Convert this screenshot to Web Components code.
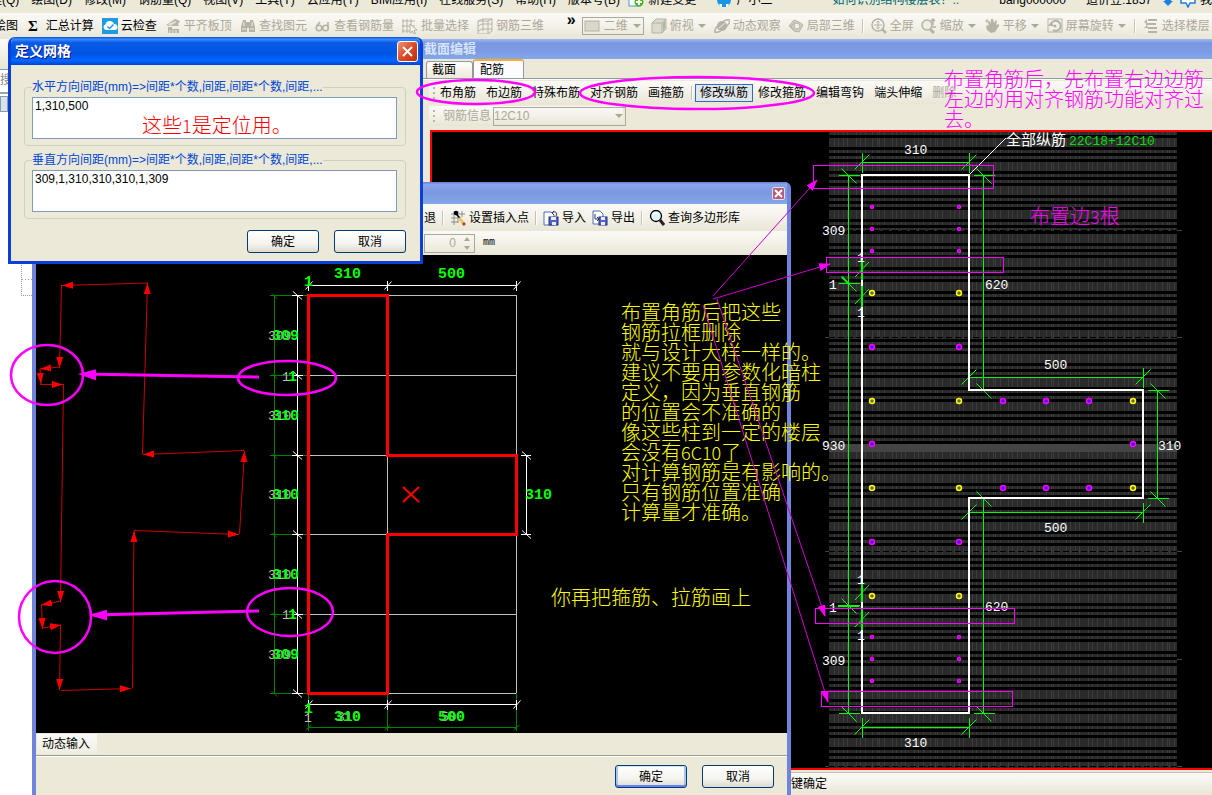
<!DOCTYPE html>
<html lang="zh-CN">
<head>
<meta charset="utf-8">
<title>定义网格</title>
<style>
  html, body { height: 100%; margin: 0; }
  body {
    font: 12px/16px "Liberation Sans", "Noto Sans CJK SC", sans-serif;
    color: #000;
    background: #ece9d8;
    overflow: hidden;
    --face: #ece9d8;
    --bar: linear-gradient(#fbfaf7, #f3f1e8 50%, #e9e6d6);
    --off: #aca899;
    --mark: #ff00ff;
  }
</style>
</head>
<body>
<cad-app></cad-app>

<script>
// small helper: every element here is a shadow root filled once
function define(name, html, setup) {
  const tpl = document.createElement("template");
  customElements.define(name, class extends HTMLElement {
    constructor() {
      super();
      this.attachShadow({ mode: "open" });
    }
    connectedCallback() {
      if (this.shadowRoot.childNodes.length) return;
      tpl.innerHTML = typeof html === "function" ? html(this) : html;
      this.shadowRoot.appendChild(tpl.content.cloneNode(true));
      if (setup) setup(this);
    }
  });
}

/* ---------- icons ---------- */
const G = "#b5b2a6";
const ICONS = {
  cloud: `<rect width="16" height="16" fill="#1f9be0"/><path d="M4 12a3 3 0 0 1-.5-5.800A4.500 4.500 0 0 1 12 6a3 3 0 0 1 1 6z" fill="#fff"/><path d="M5.500 8.500l2 2 4-4" fill="none" stroke="#1f9be0" stroke-width="1.500"/>`,
  slab: `<path d="M1 7l9-6 5 2-2 3 1 2H4z" fill="${G}"/><path d="M3 6l7-3 2 1-7 4z" fill="#e4e1d6"/><path d="M3 9h4v2h7v4H3z" fill="${G}"/><path d="M5 12v3M8 12v3M11 12v3" stroke="#efede4"/>`,
  binoculars: `<path d="M3 2h3v2h4V2h3l2 7v5H9v-4H7v4H1V9z" fill="${G}"/><path d="M2 11h4M10 11h4M4 4v4M12 4v4" stroke="#f0eee6"/>`,
  glasses: `<g fill="none" stroke="${G}" stroke-width="1.600"><circle cx="4" cy="10" r="2.800"/><circle cx="10.500" cy="10" r="2.800"/><path d="M1.500 8L5 4M13 9V4"/></g>`,
  batch: `<path d="M1 1v14M5 1v14M9 1v14M0 3h13M0 8h13M0 13h8" stroke="${G}" fill="none"/><path d="M8 6l7 6-3 .500 1.500 3-1.500.500-1.500-3L8 15z" fill="#f6f4ee" stroke="${G}"/>`,
  rebar: `<path d="M1 3l5-2h9v12l-4 3H1zM6 1v12M11 3v13M1 8l4-2h10M1 13l4-2h10M1 3h10l4-2" stroke="${G}" fill="none"/>`,
  view2d: `<rect x="1" y="3" width="14" height="10" fill="#dad7ca" stroke="${G}"/>`,
  cube: `<path d="M1 5l4-4h10v10l-4 4H1z" fill="#dcd9cd" stroke="${G}"/><path d="M1 5h10v10M11 5l4-4" fill="none" stroke="${G}"/><path d="M12 5l2-2v7l-2 3z" fill="${G}"/>`,
  orbit: `<circle cx="8" cy="8" r="5" fill="${G}"/><path d="M1 14C-1 11 11 0 15 2s-9 14-14 12z" fill="none" stroke="${G}" stroke-width="1.500"/><path d="M5 10l6-5" stroke="#eceae0"/>`,
  part3d: `<path d="M1 8l5-6 5 2 4 3-4 7-5-1z" fill="#d2cfc3" stroke="${G}"/><circle cx="9" cy="8" r="3" fill="#efede5" stroke="${G}"/><path d="M3 8l4-4M5 12l-2-4" stroke="${G}"/>`,
  full: `<circle cx="7" cy="7" r="6" fill="none" stroke="${G}" stroke-width="1.500"/><path d="M7 3v8M3 7h8M5.500 4.500L7 3l1.500 1.500M5.500 9.500L7 11l1.500-1.500" fill="none" stroke="${G}"/><path d="M11 11l4 4" stroke="${G}" stroke-width="2.500"/>`,
  zoom: `<circle cx="6" cy="7" r="5" fill="#eeece3" stroke="${G}" stroke-width="1.500"/><path d="M9 11l4 4" stroke="${G}" stroke-width="3"/><path d="M12 1v6M10 3l2-2 2 2M10 9h5" fill="none" stroke="${G}" stroke-width="1.500"/>`,
  pan: `<path d="M2 8l2-1 1 2-1-5 2-1 1 3V1h2l1 4 2-3 1 1-1 4 3-1v2l-4 6-4 1-4-3z" fill="${G}"/><path d="M1 3h4M3 1v4" stroke="${G}"/>`,
  rotate: `<rect x="1" y="1" width="14" height="13" fill="none" stroke="${G}"/><path d="M4 6a5 5 0 1 1 2 6" fill="none" stroke="${G}" stroke-width="2"/><path d="M1 8l3-4 3 4z" fill="${G}"/><circle cx="8" cy="8" r="1.500" fill="${G}"/>`,
  floor: `<path d="M5 1h9v2H5zM3 5h10v2H3zM5 9h9v2H5zM5 13h9v2H5z" fill="${G}"/><path d="M1 4l3-3v5zM4 7L1 10h4" fill="${G}"/>`,
  note: `<rect x="1" y="1" width="11" height="13" fill="#fff" stroke="#3aa0c8"/><circle cx="11" cy="10" r="4.500" fill="#49b81e"/><path d="M11 7v6M8 10h6" stroke="#fff" stroke-width="2"/>`,
  person: `<circle cx="8" cy="8" r="7" fill="#1a98e8"/><path d="M3 12h10l-2 3H5z" fill="#fff"/><path d="M6 12h4v3H6z" fill="#1a98e8"/>`,
  arrow: `<path d="M3 9h10l-5 5z" fill="#1a7fe0"/><path d="M5 2h6v7H5z" fill="#1a7fe0"/>`,
  bubble: `<path d="M1 2h14v9h-5l-2 4-2-4H1z" fill="#fff" stroke="#1a7fe0" stroke-width="1.500"/>`,
  insert: `<path d="M1 4h14M1 8h10M1 12h7M4 1v14M8 1v12M12 1v6" stroke="#8c8c8c" fill="none"/><circle cx="6" cy="3" r="2.200" fill="#000"/><path d="M6 4l4 4" stroke="#000" stroke-width="1.500"/><path d="M9 8l5 6" stroke="#e8c860" stroke-width="3"/><path d="M13 13l2 2" stroke="#c04030" stroke-width="3"/>`,
  import: `<path d="M1 2h7l3 3v10H1z" fill="#fff" stroke="#4a6fb0"/><rect x="6" y="7" width="9" height="8" fill="#5560c8" stroke="#23307c"/><path d="M8 7h5v3H8zM9 12h4v3H9z" fill="#e8ecff"/><path d="M9 3c3-3 6 0 4 3M11 1L9 3l2 2" fill="none" stroke="#335"/>`,
  export: `<path d="M1 1h7l3 3v10H1z" fill="#fff" stroke="#4a6fb0"/><path d="M3 4v5h4M5 7l2 2-2 2" fill="none" stroke="#335"/><rect x="7" y="7" width="8" height="8" fill="#5560c8" stroke="#23307c"/><path d="M9 7h4v3H9zM9 12h4v3H9z" fill="#e8ecff"/>`,
  search: `<circle cx="7" cy="6" r="5.500" fill="#dff3fb" stroke="#000" stroke-width="1.300"/><path d="M11 10l4 5" stroke="#222" stroke-width="3"/><path d="M4 5c1-2 3-2 4-2" stroke="#fff" fill="none" stroke-width="1.500"/>`,
  down: `<path d="M4 6h8l-4 4z" fill="currentColor"/>`
};

define("ui-icon", el => `
  <style>
    :host { display: block; flex: none; width: 16px; height: 16px; }
    svg { display: block; width: 100%; height: 100%; }
  </style>
  <svg viewBox="${el.getAttribute("name") === "down" ? "3 0 10 16" : "0 0 16 16"}" aria-hidden="true">${ICONS[el.getAttribute("name")]}</svg>`);

/* ---------- tool buttons ---------- */
define("tool-button", el => `
  <style>
    :host { display: block; flex: none; }
    button {
      display: flex; align-items: center; gap: 3px;
      height: 18px; margin: 0; padding: 0; border: 0;
      font: inherit; line-height: 16px; color: inherit; background: none; white-space: nowrap;
    }
    .drop { width: 10px; }
    :host([off]) button { color: var(--off); }
    :host([text]) button { padding: 0 4px; border: 1px solid transparent; }
    :host([on]) button { border-color: #316ac5; background: #e1e6e8; }
  </style>
  <button ${el.hasAttribute("off") ? "disabled" : ""}>
    ${el.hasAttribute("icon") ? `<ui-icon name="${el.getAttribute("icon")}"></ui-icon>` : ""}
    <slot></slot>
    ${el.hasAttribute("menu") ? `<ui-icon class="drop" name="down"></ui-icon>` : ""}
  </button>`);

define("tool-sep", `
  <style>:host { display: block; flex: none; width: 1px; height: 14px; background: #c5c2b2; border-right: 1px solid #fff; }</style>`);

define("tool-grip", `
  <style>:host { display: block; flex: none; width: 2px; height: 12px; background: repeating-linear-gradient(#b8b5a6 0 2px, transparent 2px 5px); }</style>`);

define("drop-down", el => `
  <style>
    :host { display: flex; align-items: center; flex: none; box-sizing: border-box; height: 18px; border: 1px solid #aca899; color: var(--off); }
    select { flex: 1; min-width: 0; appearance: none; border: 0; padding: 0; margin: 0; font: inherit; color: inherit; background: none; opacity: 1; }
    .drop { width: 10px; margin-right: 1px; }
  </style>
  <slot></slot>
  <select disabled aria-label="${el.getAttribute("label")}"><option>${el.getAttribute("value")}</option></select>
  <ui-icon class="drop" name="down"></ui-icon>`);

define("xp-button", `
  <style>
    :host { display: block; }
    button {
      display: block; width: 72px; height: 23px; padding: 0; margin: 0;
      border: 1px solid #003c74; border-radius: 3px;
      font: inherit; color: #000; background: linear-gradient(#fff, #f5f4ef 60%, #dedad0);
    }
    :host([default]) button { box-shadow: inset 0 1px #cee7ff, inset 0 -2px #6982ee, inset 2px 0 #a6c4f5, inset -2px 0 #a6c4f5; }
  </style>
  <button><slot></slot></button>`);

/* ---------- top bars ---------- */
define("menu-bar", `
  <style>
    :host { display: flex; height: 13px; overflow: hidden; background: var(--face); }
    nav, div { display: flex; align-items: center; gap: 12px; height: 16px; margin-top: -8px; white-space: nowrap; }
    nav { flex: 0 0 53%; margin-left: -22px; }
    div { flex: 1; gap: 4px; margin-left: 8px; }
    a { color: inherit; text-decoration: none; }
    .tip { margin-left: auto; color: #00666e; }
    .user { margin-left: 36px; }
    .bean { margin: 0 4px 0 16px; }
    .who { margin-left: 16px; }
  </style>
  <nav>
    <a href="#">工程(Q)</a><a href="#">绘图(D)</a><a href="#">修改(M)</a><a href="#">钢筋量(Q)</a>
    <a href="#">视图(V)</a><a href="#">工具(T)</a><a href="#">云应用(Y)</a><a href="#">BIM应用(I)</a>
    <a href="#">在线服务(S)</a><a href="#">帮助(H)</a><a href="#">版本号(B)</a>
  </nav>
  <div>
    <ui-icon name="note"></ui-icon><a href="#">新建变更</a>
    <ui-icon class="who" name="person"></ui-icon><a href="#">广小二</a>
    <a class="tip" href="#">如何识别结构楼层表？..</a>
    <span class="user">bang000000</span><span class="bean">造价豆:1857</span>
    <ui-icon name="arrow"></ui-icon><ui-icon name="bubble"></ui-icon><span>我</span>
  </div>`);

define("main-tools", `
  <style>
    :host { display: flex; height: 26px; background: var(--bar); overflow: hidden; }
    div { display: flex; align-items: center; gap: 8px; }
    .left { flex: 0 0 48%; margin-left: -6px; }
    .sum { font: bold 15px/16px "Liberation Serif", serif; margin-left: 2px; }
    .more { margin-left: auto; font-weight: bold; font-size: 16px; line-height: 10px; align-self: flex-start; padding-top: 2px; }
    .right { flex: 1; gap: 7px; padding-left: 6px; }
    drop-down { width: 62px; }
    drop-down ui-icon { margin: 0 4px 0 1px; }
  </style>
  <div class="left">
    <tool-button>绘图</tool-button>
    <span class="sum">Σ</span><tool-button>汇总计算</tool-button>
    <tool-button icon="cloud">云检查</tool-button>
    <tool-button off icon="slab">平齐板顶</tool-button>
    <tool-button off icon="binoculars">查找图元</tool-button>
    <tool-button off icon="glasses">查看钢筋量</tool-button>
    <tool-button off icon="batch">批量选择</tool-button>
    <tool-button off icon="rebar">钢筋三维</tool-button>
    <span class="more">»</span>
  </div>
  <div class="right">
    <drop-down label="视图" value="二维"><ui-icon name="view2d"></ui-icon></drop-down>
    <tool-button off icon="cube" menu>俯视</tool-button>
    <tool-button off icon="orbit">动态观察</tool-button>
    <tool-button off icon="part3d">局部三维</tool-button>
    <tool-sep></tool-sep>
    <tool-button off icon="full">全屏</tool-button>
    <tool-button off icon="zoom" menu>缩放</tool-button>
    <tool-button off icon="pan" menu>平移</tool-button>
    <tool-button off icon="rotate" menu>屏幕旋转</tool-button>
    <tool-sep></tool-sep>
    <tool-button off icon="floor">选择楼层</tool-button>
    <tool-button off icon="cube"></tool-button>
  </div>`);

define("side-panel", `
  <style>
    :host { display: flex; flex-direction: column; background: #fff; }
    .head { height: 30px; background: var(--bar); }
    .find { height: 22px; border-top: 1px solid #7f9db9; border-bottom: 2px solid #9aa4ac; color: #888; line-height: 20px; overflow: hidden; }
    .row { height: 14px; background: #d8e2ec; border: 1px solid #8a9bab; margin-top: 2px; width: 6px; }
    .tree { margin: 150px 0 0 21px; height: 32px; border: 1px dotted #999; border-right: 0;
      background: repeating-linear-gradient(90deg, #999 0 1px, transparent 1px 3px) 0 16px / 100% 1px no-repeat; }
  </style>
  <div class="head"></div><div class="find">搜</div><div class="row"></div><div class="tree"></div>`);

/* ---------- drawing helpers ---------- */
const line = (x1, y1, x2, y2, cls = "") => `<line class="${cls}" x1="${x1}" y1="${y1}" x2="${x2}" y2="${y2}"/>`;
const text = (x, y, s, cls = "") => `<text class="${cls}" x="${x}" y="${y}">${s}</text>`;

const SVG_BASE = `
  :host { display: block; flex: 1; min-height: 0; background: #000; overflow: hidden; }
  svg { display: block; width: 100%; height: 100%; }
  line, polyline, polygon, rect { shape-rendering: crispEdges; }
  .smooth { shape-rendering: auto; }
  text { font-family: "Liberation Mono", "Noto Sans CJK SC", monospace; }`;

// grid of the polygon editor, with its dimension chains
function polygonDrawing() {
  const ys = [295.5, 375.5, 455.5, 534.5, 614.5, 693.5];
  const xs = [308.5, 387.5, 516.5];
  let s = "";
  ys.forEach(y => {
    s += line(308, y, 516, y, "grid") + line(270, y, 308, y, "dk") + line(292, y, 303, y, "w");
    s += line(272, y - 2, 277, y + 3, "dk smooth") + line(293, y - 4, 302, y + 4, "w smooth");
  });
  xs.forEach(x => {
    s += line(x, 295, x, 693, "grid") + line(x, 693, x, 731, "dk");
    [285.5, 704.5].forEach(y => s += line(x, y - 5, x, y + 5, "w") + line(x - 3, y + 4, x + 4, y - 4, "w smooth"));
    s += line(x - 3, 730, x + 3, 725, "dk smooth");
  });
  s += line(308, 285.5, 516, 285.5, "w") + line(308, 704.5, 516, 704.5, "w") + line(308, 727.5, 516, 727.5, "dk");
  s += line(274.5, 295, 274.5, 693, "dk") + line(297.5, 295, 297.5, 693, "w") + line(526.5, 455, 526.5, 534, "w");
  [455.5, 534.5].forEach(y => s += line(521, y, 531, y, "w") + line(522, y - 4, 531, y + 4, "w smooth"));
  s += `<polygon class="shape" points="308.5,295.500 387.5,295.500 387.5,455.500 516.5,455.500 516.5,534.500 387.5,534.500 387.5,693.500 308.5,693.500"/>`;
  s += line(403, 487, 419, 502, "cross smooth") + line(419, 487, 403, 502, "cross smooth");

  [[335, "309"], [415, "310"], [494, "310"], [574, "310"], [654, "309"]].forEach(([y, t]) =>
    s += text(268, y + 5, t, "dim2") + text(272, y + 5, t, "dim"));
  [376, 614].forEach(y => s += text(282, y + 5, "1", "dim2") + text(288, y + 5, "1", "dim"));
  s += text(334, 278, "310", "dim") + text(438, 278, "500", "dim") + text(304, 286, "1", "dim");
  s += text(337, 721, "310", "dim2") + text(334, 721, "310", "dim") + text(441, 721, "500", "dim2") + text(438, 721, "500", "dim");
  s += text(304, 722, "1", "dim2") + text(304, 713, "1", "dim") + text(525, 499, "310", "dim");

  // hand sketched outline, one arrow for each side
  [[148, 283, 62, 285.5], [61.5, 285, 59.5, 368], [60, 367, 40, 369], [40, 369, 41, 384], [40, 384.5, 63, 384.5],
   [63.5, 384, 60.5, 602], [61, 601, 41, 605], [41.5, 605, 42.5, 629], [42, 628, 61, 625], [60.5, 625, 59.5, 690],
   [61, 690.5, 131, 688.5], [132.5, 688, 134, 531], [134, 530.5, 239, 534.5], [239.5, 534, 244.5, 451],
   [244, 450.5, 143, 454.5], [142.5, 454, 147.5, 283]
  ].forEach(p => s += line(...p, "path smooth"));
  return s;
}

define("polygon-canvas", () => `
  <style>${SVG_BASE}
    .grid { stroke: #c0c0c0; } .w { stroke: #fff; } .dk { stroke: #008000; }
    .shape { fill: none; stroke: #f00; stroke-width: 3; }
    .cross { stroke: #f00; stroke-width: 2; }
    .path { stroke: #d00000; marker-end: url(#tip); }
    .dim { font-size: 15px; font-weight: bold; fill: #0f0; }
    .dim2 { font-size: 13px; fill: #c0c0c0; }
  </style>
  <svg role="img" aria-label="网格">
    <defs><marker id="tip" markerUnits="userSpaceOnUse" markerWidth="12" markerHeight="8" refX="11" refY="4" orient="auto"><path d="M0 0.500L11 4L0 7.500z" fill="#f00"/></marker></defs>
    <g transform="translate(-36 -255)">${polygonDrawing()}</g>
  </svg>`);

// horizontal dimension: line with a crossed tick on both ends
function hDim(x1, x2, y) {
  return line(x1, y, x2, y, "g") + [x1, x2].map(x =>
    line(x, y - 10, x, y + 10, "g") + line(x - 8, y + 7, x + 7, y - 8, "g smooth")).join("");
}
function vDim(x, y1, y2, extra = []) {
  return line(x, y1, x, y2, "g") + [y1, y2, ...extra].map(y =>
    line(x - 10, y, x + 11, y, "g") + line(x - 7, y - 7, x + 8, y + 8, "g smooth")).join("");
}

function sectionDrawing() {
  let s = `<rect x="829" y="132" width="348" height="636" fill="url(#bars)"/><rect x="829" y="132" width="348" height="636" fill="url(#rows)"/>`;
  s += `<rect x="829" y="444" width="348" height="8" fill="#444"/>`;
  [230.5, 337.5, 551.5, 659.5, 766.5].forEach(y => s += line(825, y, 829, y, "end") + line(829, y, 1177, y, "axis") + line(1177, y, 1182, y, "end"));
  s += hDim(862.5, 969.5, 162.5) + hDim(969.5, 1143.5, 377.5) + hDim(969.5, 1143.5, 512.5) + hDim(862.5, 969.5, 727.5);
  s += vDim(848.5, 175.5, 713.5, [283.5, 605.5]) + vDim(983.5, 175.5, 390.5) + vDim(983.5, 498.5, 713.5) + vDim(1157.5, 390.5, 498.5);
  s += `<polygon class="outline" points="862,175 969,175 969,390 1143,390 1143,498 969,498 969,713 862,713"/>`;
  s += line(862, 260, 862, 280, "g2") + line(862, 286, 862, 307, "g2") + line(862, 583, 862, 602, "g2") + line(862, 609, 862, 630, "g2");
  [269, 296, 592, 619].forEach(y => s += line(855, y + 8, 869, y - 7, "g smooth"));
  s += line(970, 174, 1006, 138, "w smooth");
  s += line(842, 277, 849, 284, "g2 smooth") + line(838, 605.5, 859, 605.5, "g2");

  const dot = (x, y, c, r = 2.5) => `<circle cx="${x}" cy="${y}" r="${r}" fill="${c === "y" ? "#665" : "#40f"}" stroke="${c === "y" ? "#ff0" : "#f0f"}" stroke-width="1.500"/>`;
  [207, 229, 251, 637, 659, 681].forEach(y => s += dot(872, y, "m", 1.5) + dot(959, y, "m", 1.5));
  [[293, "y"], [347, "m"], [542, "m"], [596, "y"]].forEach(([y, c]) => s += dot(872, y, c) + dot(959, y, c));
  [401, 488].forEach(y => [[872, "y"], [959, "y"], [1003, "m"], [1046, "m"], [1089, "m"], [1133, "y"]].forEach(([x, c]) => s += dot(x, y, c)));
  s += dot(872, 444, "m") + dot(1133, 444, "m");

  [[904, 149, "310"], [822, 230, "309"], [829, 284, "1"], [985, 284, "620"], [1044, 364, "500"], [822, 445, "930"], [1158, 445, "310"],
   [1044, 527, "500"], [985, 606, "620"], [829, 607, "1"], [822, 660, "309"], [904, 742, "310"],
   [857, 257, "1"], [857, 312, "1"], [857, 579, "1"], [857, 635, "1"]
  ].forEach(([x, y, t]) => s += text(x, y + 5, t));
  s += text(1006, 145, "全部纵筋", "cn") + text(1069, 145, "22C18+12C10", "green");
  return s;
}

define("section-canvas", () => `
  <style>${SVG_BASE}
    :host { border: 2px solid #f00; border-right: 0; }
    text { font-size: 13px; fill: #fff; } .green { fill: #00e000; } .cn { font-size: 15px; }
    .g { stroke: #0f0; } .g2 { stroke: #0f0; stroke-width: 2; } .w { stroke: #fff; }
    .axis { stroke: #000; stroke-dasharray: 6 3; } .end { stroke: #444; }
    .outline { fill: none; stroke: #fff; stroke-width: 2; }
  </style>
  <svg role="img" aria-label="截面配筋">
    <defs>
      <pattern id="bars" width="58" height="24" patternUnits="userSpaceOnUse" x="829" y="138">
        <rect width="58" height="24" fill="#2a2a2a"/>
        <path d="M5.500 0v24M9.500 0v24M14.500 0v24M18.500 0v24M27.500 0v24M31.500 0v24M36.500 0v24M43.500 0v24M48.500 0v24M50.500 0v24M55.500 0v24" stroke="#3c3c3c"/>
      </pattern>
      <pattern id="rows" width="58" height="24" patternUnits="userSpaceOnUse" x="829" y="138">
        <path d="M0 9h58v3H0zM0 15h58v3H0zM0 21h58v3H0z" fill="#000"/>
      </pattern>
    </defs>
    <g transform="translate(-432 -132)">${sectionDrawing()}</g>
  </svg>`);

/* ---------- windows ---------- */
define("section-editor", `
  <style>
    :host { display: flex; flex-direction: column; background: var(--face); }
    h2 { margin: 0; height: 20px; padding-left: 4px; font-size: 13px; line-height: 20px; color: #d8e4f8; background: linear-gradient(#9db9f0, #7b97e0 20%, #7d9ae4 60%, #82a9e9); }
    .tabs { display: flex; align-items: flex-end; height: 19px; padding-left: 6px; border-bottom: 1px solid #919b9c; box-shadow: 0 1px #fff; }
    .tabs button { height: 17px; margin: 0; padding: 0 16px 0 5px; border: 1px solid #919b9c; border-bottom: 0; border-radius: 3px 3px 0 0; font: inherit; background: linear-gradient(#fff, #ece9d8); }
    .tabs .on { height: 19px; padding: 0 19px 0 6px; border-top: 2px solid #ffab2e; background: #fcfcfe; }
    .bar { display: flex; align-items: center; height: 23px; margin: 2px 0 0 9px; padding-left: 4px; background: var(--bar); white-space: nowrap; }
    .info { align-self: flex-start; gap: 8px; width: 190px; height: 20px; margin-bottom: 4px; color: var(--off); }
    .info drop-down { width: 133px; margin-left: -6px; height: 19px; }
    .wide { margin-left: 2px; }
    section-canvas { margin-left: 10px; }
    footer { display: flex; align-items: center; height: 22px; margin-top: 2px; padding-left: 371px; border-top: 1px solid #c5c2b2; background: var(--bar); }
  </style>
  <h2>截面编辑</h2>
  <div class="tabs"><button>截面</button><button class="on">配筋</button></div>
  <div class="bar">
    <tool-grip></tool-grip>
    <tool-button text>布角筋</tool-button><tool-button text>布边筋</tool-button><tool-button text>特殊布筋</tool-button>
    <tool-button text>对齐钢筋</tool-button><tool-button text>画箍筋</tool-button>
    <tool-sep class="wide"></tool-sep><tool-button class="wide" text on>修改纵筋</tool-button>
    <tool-button text>修改箍筋</tool-button><tool-button text>编辑弯钩</tool-button><tool-button text>端头伸缩</tool-button>
    <tool-button text off>删除</tool-button>
  </div>
  <div class="bar info"><tool-grip></tool-grip>钢筋信息<drop-down label="钢筋信息" value="12C10"></drop-down></div>
  <section-canvas></section-canvas>
  <footer>键确定</footer>`);

define("polygon-editor", `
  <style>
    :host { display: flex; flex-direction: column; box-sizing: border-box; border: solid #6f85dc; border-width: 0 4px; border-radius: 6px 6px 0 0; background: var(--face); overflow: hidden; }
    header { display: flex; align-items: center; justify-content: flex-end; height: 22px; margin: 0 -4px; padding-right: 6px; background: linear-gradient(#5f78cc, #8aa5ea 10%, #7b97e0 50%, #82a9e9); }
    .x { width: 13px; height: 13px; padding: 0; border: 1px solid #e8d8e8; border-radius: 2px; background: #b0607c; }
    .x svg { display: block; width: 11px; height: 11px; }
    .bar { display: flex; align-items: center; gap: 6px; height: 27px; padding-left: 388px; background: var(--bar); }
    .size { height: 24px; gap: 0; }
    .spin { display: flex; align-items: center; box-sizing: border-box; width: 51px; height: 19px; border: 1px solid #aca899; margin-right: 8px; }
    .spin input { flex: 1; min-width: 0; border: 0; padding: 0 4px 0 0; text-align: right; font: inherit; color: #aca899; background: none; }
    .spin svg { width: 14px; height: 17px; }
    .unit { font-family: "Liberation Mono", monospace; font-size: 10px; }
    .tab { height: 22px; border-bottom: 1px solid #9d9a8c; box-shadow: 0 1px #fff; }
    .tab button { height: 20px; margin: 1px; padding: 0 7px 0 5px; border: 0; font: inherit; background: linear-gradient(#fbfaf7, #efede2); }
    .actions { display: flex; justify-content: flex-end; gap: 15px; height: 30px; padding: 9px 13px 0 0; }
  </style>
  <header><button class="x" aria-label="关闭"><svg viewBox="0 0 11 11"><path d="M2 2l7 7M9 2l-7 7" stroke="#fff" stroke-width="2"/></svg></button></header>
  <div class="bar">
    <tool-button>退</tool-button><tool-sep></tool-sep>
    <tool-button icon="insert">设置插入点</tool-button><tool-sep></tool-sep>
    <tool-button icon="import">导入</tool-button><tool-button icon="export">导出</tool-button><tool-sep></tool-sep>
    <tool-button icon="search">查询多边形库</tool-button>
  </div>
  <div class="bar size">
    <div class="spin"><input value="0" disabled aria-label="偏移"><svg viewBox="0 0 14 17"><path d="M4 6h6L7 2zM4 11h6l-3 4z" fill="#aca899"/></svg></div>
    <span class="unit">mm</span>
  </div>
  <polygon-canvas></polygon-canvas>
  <div class="tab"><button>动态输入</button></div>
  <div class="actions"><xp-button default>确定</xp-button><xp-button>取消</xp-button></div>`);

define("spacing-field", el => `
  <style>
    :host { display: block; }
    fieldset { margin: 0; padding: 3px 8px 6px 7px; border: 1px solid #d0d0bf; border-radius: 4px; }
    legend { padding: 0; color: #0046d5; line-height: 14px; white-space: nowrap; }
    textarea { display: block; box-sizing: border-box; width: 100%; height: 42px; margin: 0; padding: 0 2px; border: 1px solid #7f9db9; border-radius: 0; font: inherit; resize: none; background: #fff; color: #000; }
  </style>
  <fieldset>
    <legend><label for="v">${el.getAttribute("label")}</label></legend>
    <textarea id="v">${el.getAttribute("value")}</textarea>
  </fieldset>`);

define("grid-dialog", `
  <style>
    :host { display: block; box-sizing: border-box; border: 3px solid #0a3fd8; border-top: 0; border-radius: 7px 7px 0 0; background: var(--face); overflow: hidden; }
    header { display: flex; align-items: center; justify-content: space-between; height: 28px; margin: 0 -3px; padding: 0 5px 0 7px; background: linear-gradient(#0a50d8, #3b8cff 8%, #0a5ce6 20%, #0054e3 60%, #0066ff 85%, #0043cc); }
    h1 { margin: 0; font-size: 14px; line-height: 20px; color: #fff; text-shadow: 1px 1px #0f1089; }
    header button { width: 21px; height: 21px; padding: 0; border: 1px solid #fff; border-radius: 3px; background: linear-gradient(135deg, #f0937a, #dc4a26 50%, #b83010); }
    header svg { display: block; width: 19px; height: 19px; }
    form { display: flex; flex-direction: column; gap: 7px; padding: 15px 14px 8px 13px; }
    .actions { display: flex; justify-content: flex-end; gap: 15px; padding-top: 4px; }
  </style>
  <header>
    <h1>定义网格</h1>
    <button aria-label="关闭"><svg viewBox="0 0 19 19"><path d="M5 5l9 9M14 5l-9 9" stroke="#fff" stroke-width="2"/></svg></button>
  </header>
  <form onsubmit="return false">
    <spacing-field label="水平方向间距(mm)=&gt;间距*个数,间距,间距*个数,间距,..." value="1,310,500"></spacing-field>
    <spacing-field label="垂直方向间距(mm)=&gt;间距*个数,间距,间距*个数,间距,..." value="309,1,310,310,310,1,309"></spacing-field>
    <div class="actions"><xp-button>确定</xp-button><xp-button>取消</xp-button></div>
  </form>`);

/* ---------- annotations over all windows ---------- */
const NOTES = ["布置角筋后把这些", "钢筋拉框删除", "就与设计大样一样的。", "建议不要用参数化暗柱", "定义，因为垂直钢筋", "的位置会不准确的",
  "像这些柱到一定的楼层", '会没有<tspan class="half">6C10</tspan>了', "对计算钢筋是有影响的。", "只有钢筋位置准确", "计算量才准确。"];

define("mark-layer", () => `
  <style>
    :host { display: block; pointer-events: none; }
    svg { display: block; width: 100%; height: 100%; }
    text { font: 20px "Noto Sans CJK SC", sans-serif; font-weight: 300; }
    .half { font-size: 18px; }
    ellipse, rect { fill: none; stroke: var(--mark); }
    ellipse { stroke-width: 2.5; } rect { shape-rendering: crispEdges; }
    .thin { stroke: #d000d0; marker-end: url(#small); }
    .thick { stroke: var(--mark); stroke-width: 3; marker-end: url(#big); }
    .yellow { fill: #ff0; } .red { fill: #f00; } .pink { fill: var(--mark); }
  </style>
  <svg>
    <defs>
      <marker id="small" markerUnits="userSpaceOnUse" markerWidth="13" markerHeight="8" refX="11" refY="4" orient="auto"><path d="M0 0L12 4L0 8z" fill="#f0f"/></marker>
      <marker id="big" markerUnits="userSpaceOnUse" markerWidth="18" markerHeight="12" refX="14" refY="6" orient="auto"><path d="M0 0L18 6L0 11z" fill="#f0f"/></marker>
    </defs>
    <ellipse cx="476" cy="92" rx="59" ry="12"/><ellipse cx="697" cy="93" rx="117" ry="16"/>
    <ellipse cx="47" cy="375" rx="36" ry="30"/><ellipse cx="55" cy="617" rx="36" ry="36"/>
    <ellipse cx="287" cy="378" rx="49" ry="17"/><ellipse cx="290" cy="612" rx="43" ry="24"/>
    ${line(259, 377, 82, 374, "thick")}${line(259, 611, 93, 615, "thick")}
    ${NOTES.map((t, i) => text(621, 320 + i * 20, t, "yellow")).join("")}
    ${text(551, 605, "你再把箍筋、拉筋画上", "yellow")}
    ${line(713, 296, 817, 180, "thin")}${line(713, 299, 830, 264, "thin")}
    ${line(703, 305, 828, 702, "thin")}${line(717, 299, 825, 616, "thin")}
    <rect x="813.5" y="165.5" width="180" height="23"/><rect x="826.5" y="257.5" width="177" height="15"/>
    <rect x="815.5" y="608.5" width="199" height="15"/><rect x="821.5" y="691.5" width="191" height="15"/>
    ${text(142, 133, '这些<tspan class="half">1</tspan>是定位用。', "red")}
    ${text(1030, 224, '布置边<tspan class="half">3</tspan>根', "pink")}
    ${text(944, 87, "布置角筋后，先布置右边边筋", "pink")}
    ${text(944, 107, "左边的用对齐钢筋功能对齐过", "pink")}
    ${text(944, 127, "去。", "pink")}
  </svg>`);

define("cad-app", `
  <style>
    :host { display: flex; flex-direction: column; height: 100vh; position: relative; overflow: hidden; }
    main { flex: 1; position: relative; background: #fff; }
    main > * { position: absolute; }
    side-panel { left: 0; top: 0; bottom: 0; width: 424px; }
    section-editor { left: 420px; right: 0; top: 0; bottom: 0; }
    polygon-editor { left: 32px; top: 143px; bottom: 0; width: 759px; }
    grid-dialog { left: 8px; top: -2px; width: 415px; }
    mark-layer { position: absolute; inset: 0; }
  </style>
  <menu-bar></menu-bar>
  <main-tools></main-tools>
  <main>
    <side-panel></side-panel>
    <section-editor></section-editor>
    <polygon-editor></polygon-editor>
    <grid-dialog></grid-dialog>
  </main>
  <mark-layer></mark-layer>`);
</script>
</body>
</html>
